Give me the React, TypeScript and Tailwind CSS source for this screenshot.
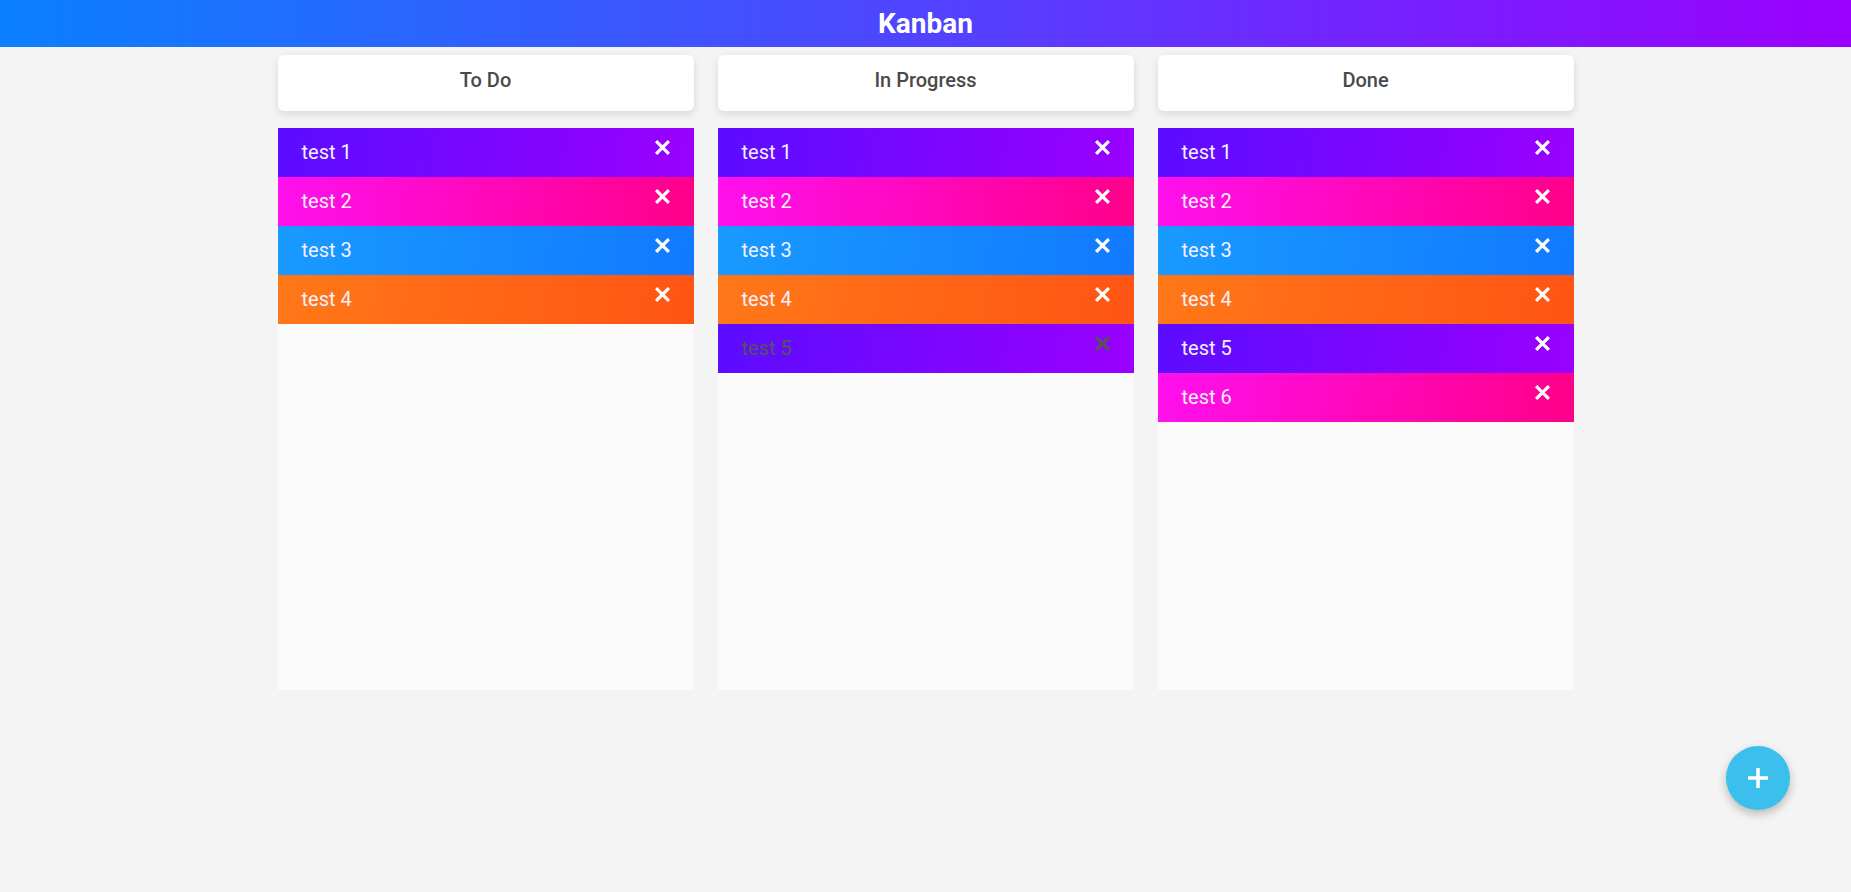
import { useState } from 'react';

type Task = { id: number; title: string; faded?: boolean };

const gradients = [
  'bg-[linear-gradient(100deg,#5b0cff,#9a00ff)]',
  'bg-[linear-gradient(100deg,#ff10ee,#ff0088)]',
  'bg-[linear-gradient(100deg,#189bff,#1279ff)]',
  'bg-[linear-gradient(100deg,#ff7818,#ff5414)]',
];

const CloseIcon = ({ className }: { className?: string }) => (
  <svg viewBox="0 0 16 16" className={className} fill="none" stroke="currentColor" strokeWidth="3">
    <path d="M2 2 14 14M14 2 2 14" />
  </svg>
);

const TaskCard = ({ task, index }: { task: Task; index: number }) => (
  <div className={`flex h-[49px] items-start justify-between pl-6 pr-[23px] ${gradients[index % 4]}`}>
    <span className={`mt-[10px] text-[20px] leading-[28px] ${task.faded ? 'text-[#555]' : 'text-[#f4f0ff]'}`}>
      {task.title}
    </span>
    <button className={`mt-[11px] ${task.faded ? 'text-[#555]' : 'text-white'}`}>
      <CloseIcon className="h-[17px] w-[17px]" />
    </button>
  </div>
);

const Column = ({ title, tasks }: { title: string; tasks: Task[] }) => (
  <div className="flex w-[416px] flex-col">
    <div className="h-[56px] rounded-[6px] bg-white pt-[11px] text-center text-[20px] font-medium leading-[28px] text-[#4a4a4a] shadow-[0_3px_8px_rgba(0,0,0,0.12)]">
      {title}
    </div>
    <div className="mt-[17px] h-[562px] bg-[#fbfbfb]">
      {tasks.map((task, i) => (
        <TaskCard key={task.id} task={task} index={i} />
      ))}
    </div>
  </div>
);

const make = (n: number, fadedIdx = -1): Task[] =>
  Array.from({ length: n }, (_, i) => ({ id: i + 1, title: `test ${i + 1}`, faded: i === fadedIdx }));

export default function App() {
  const [columns] = useState([
    { title: 'To Do', tasks: make(4) },
    { title: 'In Progress', tasks: make(5, 4) },
    { title: 'Done', tasks: make(6) },
  ]);

  return (
    <div className="relative min-h-[892px] bg-[#f4f4f4] font-['Roboto',sans-serif]">
      <header className="flex h-[47px] items-center justify-center bg-[linear-gradient(90deg,#0a80ff,#4a4aff_45%,#9a00ff)]">
        <h1 className="text-[28px] font-bold leading-none text-white">Kanban</h1>
      </header>
      <div className="mx-auto mt-[8px] flex w-[1296px] gap-6">
        {columns.map((col) => (
          <Column key={col.title} title={col.title} tasks={col.tasks} />
        ))}
      </div>
      <button className="absolute bottom-[82px] right-[61px] flex h-16 w-16 items-center justify-center rounded-full bg-[#3bbfed] text-white shadow-[0_4px_10px_rgba(0,0,0,0.25)]">
        <svg viewBox="0 0 20 20" className="h-5 w-5" fill="none" stroke="currentColor" strokeWidth="3.5">
          <path d="M10 0v20M0 10h20" />
        </svg>
      </button>
    </div>
  );
}
